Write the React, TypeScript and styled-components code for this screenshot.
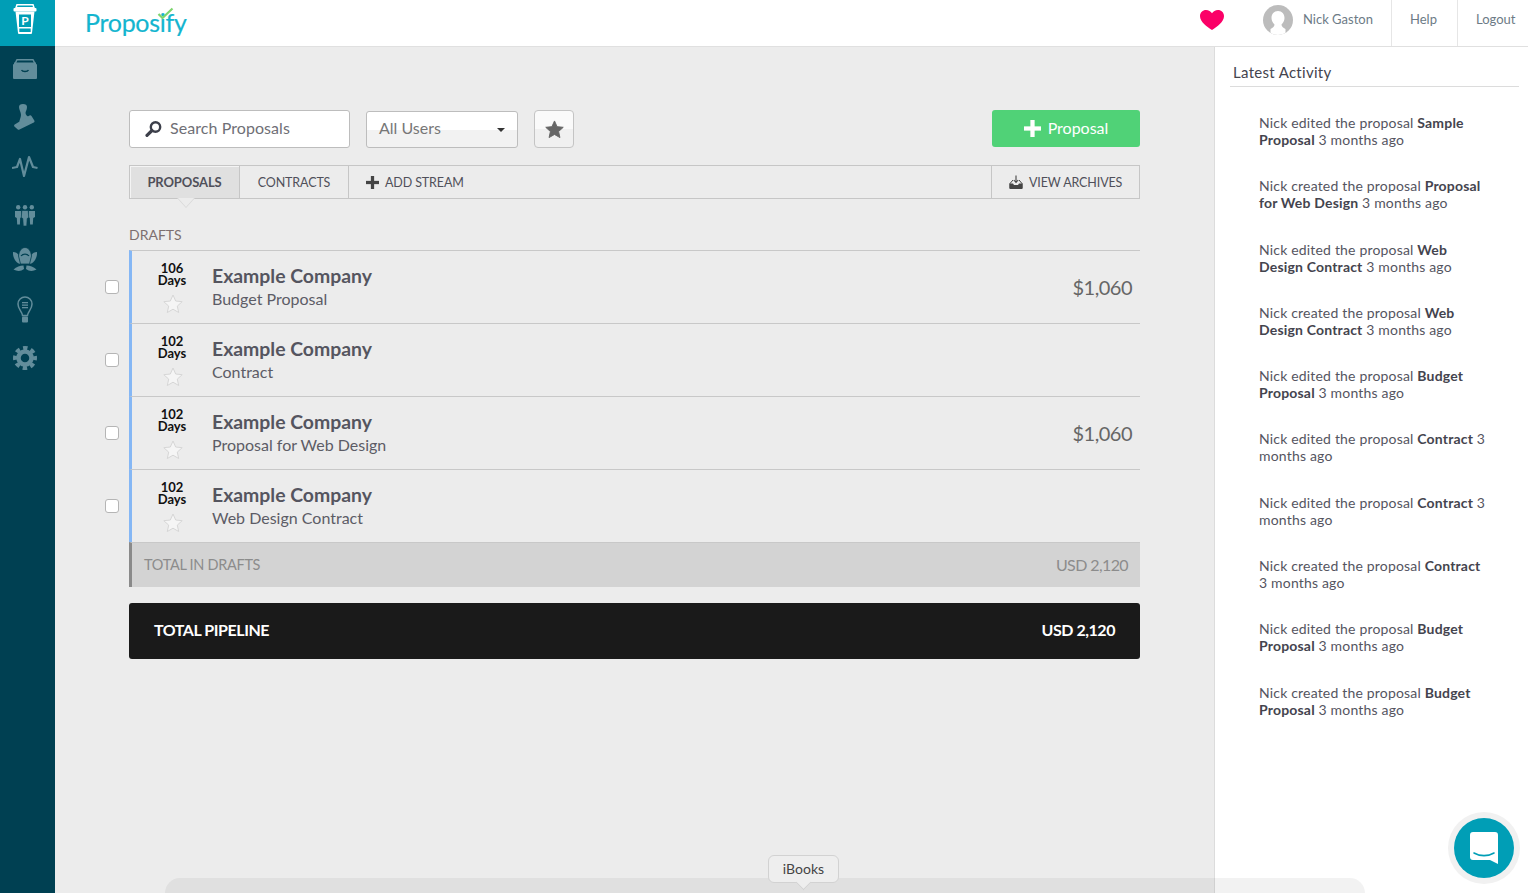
import styled, { createGlobalStyle } from "styled-components";

const GlobalStyle = createGlobalStyle`
  html, body {
    margin: 0;
    height: 100%;
    overflow: hidden;
    font-family: "Lato", "Liberation Sans", sans-serif;
    background: #ececec;
  }
  * { box-sizing: border-box; }
`;

const deals = [
  { days: 106, title: "Budget Proposal", amount: "$1,060" },
  { days: 102, title: "Contract", amount: "" },
  { days: 102, title: "Proposal for Web Design", amount: "$1,060" },
  { days: 102, title: "Web Design Contract", amount: "" },
];

const activity = [
  ["Nick edited the proposal", "Sample Proposal"],
  ["Nick created the proposal", "Proposal for Web Design"],
  ["Nick edited the proposal", "Web Design Contract"],
  ["Nick created the proposal", "Web Design Contract"],
  ["Nick edited the proposal", "Budget Proposal"],
  ["Nick edited the proposal", "Contract"],
  ["Nick edited the proposal", "Contract"],
  ["Nick created the proposal", "Contract"],
  ["Nick edited the proposal", "Budget Proposal"],
  ["Nick created the proposal", "Budget Proposal"],
];

const teal = "#009eb6";
const iconColor = "#628d9b";
const sideColor = "#004052";

function Plus({ size, color }: { size: number; color: string }) {
  const bar = size / 4;
  const start = (size - bar) / 2;
  return (
    <svg width={size} height={size} viewBox={`0 0 ${size} ${size}`}>
      <rect x={start} y="0" width={bar} height={size} fill={color} />
      <rect x="0" y={start} width={size} height={bar} fill={color} />
    </svg>
  );
}

function StarShape({ size, fill, stroke }: { size: number; fill: string; stroke: string }) {
  return (
    <svg width={size} height={size} viewBox="0 0 20 20">
      <path
        d="M10 1l2.700 6 6.500.7-4.900 4.400 1.400 6.400L10 15.200l-5.700 3.300 1.400-6.400L.8 7.700l6.500-.7z"
        fill={fill}
        stroke={stroke}
        strokeWidth="1"
      />
    </svg>
  );
}

function CupIcon() {
  return (
    <svg width="24" height="30" viewBox="0 0 24 30">
      <path d="M4 0.800h16l1 3H3z" fill="none" stroke="#fff" strokeWidth="1.500" />
      <rect x="0.500" y="4" width="23" height="3.400" rx="1" fill="#fff" />
      <path d="M2.500 7.500h19L19 29a1 1 0 0 1-1 1H6a1 1 0 0 1-1-1z" fill="#fff" />
      <rect x="6" y="10.500" width="12" height="12.500" fill={teal} />
      <rect x="6.300" y="24.500" width="11.400" height="3.500" fill={teal} />
      <text x="12" y="21" textAnchor="middle" fontSize="12" fontWeight="700" fontFamily="Lato, sans-serif" fill="#fff">P</text>
    </svg>
  );
}

function ArchiveIcon() {
  return (
    <svg width="24" height="20" viewBox="0 0 24 20">
      <path d="M2 5l1.500-3.500a1 1 0 0 1 1-.8h15a1 1 0 0 1 1 .8L22 5" fill="none" stroke={iconColor} strokeWidth="1.500" />
      <path d="M1 5h22a1 1 0 0 1 1 1v13a1 1 0 0 1-1 1H1a1 1 0 0 1-1-1V6a1 1 0 0 1 1-1z" fill={iconColor} />
      <rect x="1" y="3.500" width="22" height="2" fill={iconColor} />
      <path d="M8.500 11c1 2 6 2 7 0" fill="none" stroke={sideColor} strokeWidth="1.300" />
    </svg>
  );
}

function StampIcon() {
  return (
    <svg width="21" height="26" viewBox="0 0 21 26">
      <path d="M5 3a4 3 0 0 1 8 0c0 3-1.500 4-1.500 6 0 2 2 3 3 4l-9 5.500C5 16 7 14 7 11c0-3-2-5-2-8z" fill={iconColor} />
      <path d="M0.700 20.500L15.500 11.500a1.500 1.500 0 0 1 2 .4l2.800 4.600a1.500 1.500 0 0 1-.5 2L5.500 25.500a1.500 1.500 0 0 1-2-.3L.4 22.500a1.500 1.500 0 0 1 .3-2z" fill={iconColor} />
    </svg>
  );
}

function PulseIcon() {
  return (
    <svg width="26" height="23" viewBox="0 0 26 23">
      <polyline
        points="0,13 5,12 8,4 12,21 17,2 21,12 25.500,13"
        fill="none"
        stroke={iconColor}
        strokeWidth="2.200"
        strokeLinejoin="round"
      />
    </svg>
  );
}

function PeopleIcon() {
  return (
    <svg width="20" height="21" viewBox="0 0 20 21">
      <circle cx="3.200" cy="2.200" r="2.200" fill={iconColor} />
      <circle cx="10" cy="2.200" r="2.200" fill={iconColor} />
      <circle cx="16.800" cy="2.200" r="2.200" fill={iconColor} />
      <path d="M0 6h6l.4 6-1.200 1-.3 6.500H2.200L1.800 13 0 12z" fill={iconColor} />
      <path d="M20 6h-6l-.4 6 1.200 1 .3 6.500h2.700l.4-6.500 1.800-1z" fill={iconColor} />
      <path d="M6.800 5.500h6.400l.5 7-1.500 1-.5 7.500H8.300l-.5-7.500-1.500-1z" fill={iconColor} stroke={sideColor} strokeWidth=".6" />
    </svg>
  );
}

function LotusIcon() {
  return (
    <svg width="24" height="26" viewBox="0 0 24 26">
      <path d="M0 5c2.500 0 4.500 1 5.500 3L8 17C3.500 17-.5 11 0 5z" fill={iconColor} />
      <path d="M24 5c-2.500 0-4.500 1-5.500 3L16 17c4.500 0 8.500-6 8-12z" fill={iconColor} />
      <path d="M5.500 9C6 4 8.500 0.500 12 0.500S18 4 18.500 9l-2 8h-9z" fill={iconColor} stroke={sideColor} strokeWidth=".8" />
      <path d="M8 9c2-2.500 6-2.500 8 0" fill="none" stroke={sideColor} strokeWidth="1.200" />
      <path d="M0.500 22.500C3.500 20 7 18.500 10.500 18.500L11 22c-3 2.500-7 2.500-10.500.5z" fill={iconColor} />
      <path d="M23.500 22.500C20.500 20 17 18.500 13.500 18.500L13 22c3 2.500 7 2.500 10.500.5z" fill={iconColor} />
    </svg>
  );
}

function BulbIcon() {
  return (
    <svg width="16" height="27" viewBox="0 0 16 27">
      <path d="M5.500 19.500C5 15 1 13.500 1 8a7 7 0 0 1 14 0c0 5.500-4 7-4.500 11.500z" fill="none" stroke={iconColor} strokeWidth="1.500" />
      <rect x="5" y="6" width="6" height="1.300" fill={iconColor} />
      <rect x="5" y="8.500" width="6" height="1.300" fill={iconColor} />
      <rect x="5" y="11" width="6" height="1.300" fill={iconColor} />
      <rect x="5" y="20.500" width="6" height="6" rx="1" fill={iconColor} />
    </svg>
  );
}

function GearIcon() {
  return (
    <svg width="24" height="24" viewBox="0 0 24 24">
      <circle cx="12" cy="12" r="6.500" fill="none" stroke={iconColor} strokeWidth="4.500" />
      <circle cx="12" cy="12" r="10" fill="none" stroke={iconColor} strokeWidth="4" strokeDasharray="4.400 3.450" strokeDashoffset="2.200" />
    </svg>
  );
}

function SearchIcon() {
  return (
    <svg width="17" height="16" viewBox="0 0 17 16">
      <circle cx="10.500" cy="6" r="4.700" fill="none" stroke="#3c3f4a" strokeWidth="2.400" />
      <line x1="7" y1="9.500" x2="2" y2="14.300" stroke="#3c3f4a" strokeWidth="3.200" strokeLinecap="round" />
    </svg>
  );
}

function TrayIcon() {
  return (
    <svg width="14" height="14" viewBox="0 0 14 14">
      <path d="M4 5L1 8.500V13a1 1 0 0 0 1 1h10a1 1 0 0 0 1-1V8.500L10 5" fill="none" stroke="#444" strokeWidth="1" />
      <path d="M.5 8.500h3.500l1 1.500h4l1-1.500h3.500V13a1 1 0 0 1-1 1h-11a1 1 0 0 1-1-1z" fill="#444" />
      <path d="M7 0.500V7M4.800 5L7 7.500 9.200 5" fill="none" stroke="#444" strokeWidth="1.100" />
    </svg>
  );
}

function HeartIcon() {
  return (
    <svg width="24" height="20" viewBox="0 0 24 20">
      <path d="M12 20C7 16.500 0 12 0 6.200 0 2.500 2.800 0 6 0c2.600 0 4.800 1.300 6 3.200C13.200 1.300 15.400 0 18 0c3.200 0 6 2.500 6 6.200C24 12 17 16.500 12 20z" fill="#fb0067" />
    </svg>
  );
}

function AvatarIcon() {
  return (
    <svg width="30" height="30" viewBox="0 0 30 30">
      <defs>
        <clipPath id="avatar-clip">
          <circle cx="15" cy="15" r="15" />
        </clipPath>
      </defs>
      <g clipPath="url(#avatar-clip)">
        <rect width="30" height="30" fill="#bcbcbc" />
        <path d="M15 6c4 0 6.500 3 6.500 7 0 3-1.500 5-3 6.500 0 2 1.500 3 4 4.500v6H7.500v-6c2.500-1.500 4-2.500 4-4.500-1.500-1.500-3-3.500-3-6.500 0-4 2.500-7 6.500-7z" fill="#fff" />
      </g>
    </svg>
  );
}

function ChatIcon() {
  return (
    <svg width="28" height="32" viewBox="0 0 28 32">
      <path d="M3 0h22a3 3 0 0 1 3 3v29l-8-4H3a3 3 0 0 1-3-3V3a3 3 0 0 1 3-3z" fill="#fff" />
      <path d="M4 21c6 3.500 14 3.500 20 0" fill="none" stroke={teal} strokeWidth="1.600" strokeLinecap="round" />
    </svg>
  );
}

export default function App() {
  return (
    <Page>
      <GlobalStyle />
      <Sidebar>
        <Brand>
          <CupIcon />
        </Brand>
        <NavItem $h={46}><ArchiveIcon /></NavItem>
        <NavItem $h={50}><StampIcon /></NavItem>
        <NavItem $h={48}><PulseIcon /></NavItem>
        <NavItem $h={50}><PeopleIcon /></NavItem>
        <NavItem $h={40}><LotusIcon /></NavItem>
        <NavItem $h={58}><BulbIcon /></NavItem>
        <NavItem $h={40}><GearIcon /></NavItem>
      </Sidebar>

      <Body>
        <Header>
          <Logo>
            Proposify
            <LogoCheck width="17" height="13" viewBox="0 0 17 13">
              <path d="M1.500 7l4 4L15.500 1.500" fill="none" stroke="#7dd56f" strokeWidth="2.200" />
            </LogoCheck>
          </Logo>
          <HeaderRight>
            <HeartCell><HeartIcon /></HeartCell>
            <UserCell>
              <AvatarIcon />
              <span>Nick Gaston</span>
            </UserCell>
            <HeaderLink $w={66} $left={18}>Help</HeaderLink>
            <HeaderLink $w={71} $left={18}>Logout</HeaderLink>
          </HeaderRight>
        </Header>

        <Columns>
          <Main>
            <Toolbar>
              <SearchBox>
                <SearchIcon />
                <span>Search Proposals</span>
              </SearchBox>
              <SelectBox>
                <span>All Users</span>
                <Caret />
              </SelectBox>
              <StarButton>
                <StarShape size={19} fill="#666" stroke="#666" />
              </StarButton>
              <NewButton>
                <Plus size={17} color="#fff" />
                <span>Proposal</span>
              </NewButton>
            </Toolbar>

            <Tabs>
              <Tab $active $w={110}>PROPOSALS</Tab>
              <Tab $w={109}>CONTRACTS</Tab>
              <AddStream>
                <Plus size={13} color="#444" />
                <span>ADD STREAM</span>
              </AddStream>
              <Archives>
                <TrayIcon />
                <span>VIEW ARCHIVES</span>
              </Archives>
            </Tabs>

            <SectionLabel>DRAFTS</SectionLabel>
            {deals.map((deal, i) => (
              <DealRow key={i}>
                <Check />
                <DealCard>
                  <DaysCol>
                    <Days>{deal.days}<br />Days</Days>
                    <StarShape size={20} fill="#f5f5f5" stroke="#d6d6d6" />
                  </DaysCol>
                  <DealText>
                    <Company>Example Company</Company>
                    <DealTitle>{deal.title}</DealTitle>
                  </DealText>
                  <Amount>{deal.amount}</Amount>
                </DealCard>
              </DealRow>
            ))}
            <TotalRow>
              <span>TOTAL IN DRAFTS</span>
              <TotalValue>USD 2,120</TotalValue>
            </TotalRow>
            <Pipeline>
              <span>TOTAL PIPELINE</span>
              <span>USD 2,120</span>
            </Pipeline>
          </Main>

          <Aside>
            <AsideTitle>Latest Activity</AsideTitle>
            <ActivityList>
              {activity.map(([action, name], i) => (
                <ActivityItem key={i}>
                  {action} <b>{name}</b> 3 months ago
                </ActivityItem>
              ))}
            </ActivityList>
          </Aside>
        </Columns>
      </Body>

      <Dock />
      <DockTip>iBooks</DockTip>
      <ChatHalo>
        <ChatBubble>
          <ChatIcon />
        </ChatBubble>
      </ChatHalo>
    </Page>
  );
}

// STYLING
const Page = styled.div`
  display: flex;
  height: 100vh;
  overflow: hidden;
  position: relative;
`;

const Sidebar = styled.nav`
  width: 55px;
  flex: none;
  display: flex;
  flex-direction: column;
  background: ${sideColor};
`;

const Brand = styled.div`
  height: 46px;
  background: ${teal};
  display: flex;
  justify-content: center;
  padding-top: 4px;
  padding-right: 6px;
`;

const NavItem = styled.div<{ $h: number }>`
  height: ${(p) => p.$h}px;
  display: flex;
  align-items: center;
  justify-content: center;
  padding-right: 6px;
`;

const Body = styled.div`
  flex: 1;
  min-width: 0;
  display: flex;
  flex-direction: column;
`;

const Header = styled.header`
  height: 47px;
  flex: none;
  background: #fff;
  border-bottom: 1px solid #e0e0e0;
  display: flex;
  align-items: stretch;
  justify-content: space-between;
  padding-left: 31px;
`;

const Logo = styled.div`
  position: relative;
  align-self: center;
  margin-top: -2px;
  margin-left: -1px;
  color: #14b5cf;
  font-size: 25px;
  letter-spacing: -0.3px;
  -webkit-text-stroke: 0.2px #14b5cf;
`;

const LogoCheck = styled.svg`
  position: absolute;
  left: 72px;
  top: 0;
`;

const HeaderRight = styled.div`
  display: flex;
  align-items: stretch;
`;

const HeartCell = styled.div`
  display: flex;
  align-items: center;
  padding-right: 39px;
  padding-bottom: 6px;
`;

const UserCell = styled.div`
  display: flex;
  align-items: flex-start;
  gap: 10px;
  width: 128px;
  padding-top: 5px;
  color: #6d7b86;
  font-size: 13px;

  span {
    margin-top: 6px;
  }
`;

const HeaderLink = styled.div<{ $w: number; $left: number }>`
  width: ${(p) => p.$w}px;
  border-left: 1px solid #e6e6e6;
  color: #6d7b86;
  font-size: 13px;
  padding: 11px 0 0 ${(p) => p.$left}px;
`;

const Columns = styled.div`
  flex: 1;
  display: flex;
  min-height: 0;
`;

const Main = styled.main`
  flex: 1;
  min-width: 0;
  padding: 63px 74px 0;
`;

const Toolbar = styled.div`
  display: flex;
  align-items: flex-start;
  height: 38px;
`;

const SearchBox = styled.div`
  width: 221px;
  height: 38px;
  display: flex;
  align-items: center;
  gap: 8px;
  padding-left: 15px;
  background: #fff;
  border: 1px solid #bdbdbd;
  border-radius: 3px;
  color: #6f6f76;
  font-size: 16px;
  letter-spacing: 0.07px;

  span {
    margin-top: -3px;
  }
`;

const SelectBox = styled.div`
  width: 152px;
  height: 37px;
  margin: 1px 0 0 16px;
  display: flex;
  align-items: center;
  justify-content: space-between;
  padding: 0 12px;
  background: linear-gradient(#fff 50%, #f2f2f2 50%);
  border: 1px solid #bdbdbd;
  border-radius: 3px;
  color: #777;
  font-size: 16px;

  span {
    margin-top: -4px;
  }
`;

const Caret = styled.i`
  width: 0;
  height: 0;
  border-left: 4px solid transparent;
  border-right: 4px solid transparent;
  border-top: 4px solid #333;
`;

const StarButton = styled.div`
  width: 40px;
  height: 38px;
  margin-left: 16px;
  display: flex;
  align-items: center;
  justify-content: center;
  background: linear-gradient(#fafafa 50%, #f0f0f0 50%);
  border: 1px solid #c4c4c4;
  border-radius: 4px;
`;

const NewButton = styled.div`
  width: 148px;
  height: 37px;
  margin-left: auto;
  display: flex;
  align-items: center;
  justify-content: center;
  gap: 7px;
  background: #50d277;
  border-radius: 3px;
  color: #fff;
  font-size: 16px;

  span {
    margin-top: -2px;
  }
`;

const Tabs = styled.div`
  display: flex;
  height: 34px;
  margin-top: 17px;
  border: 1px solid #c6c6c6;
  font-size: 12.500px;
  letter-spacing: -0.12px;
  color: #50505a;
`;

const Tab = styled.div<{ $active?: boolean; $w: number }>`
  position: relative;
  width: ${(p) => p.$w}px;
  display: flex;
  align-items: center;
  justify-content: center;
  border-right: 1px solid #c6c6c6;
  background: ${(p) => (p.$active ? "#e0e0e0" : "transparent")};
  font-size: ${(p) => (p.$active ? "13px" : "12.500px")};
  font-weight: ${(p) => (p.$active ? 700 : 400)};
  box-shadow: ${(p) => (p.$active ? "inset 1px 1px 0 #f4f4f4" : "none")};

  &::before,
  &::after {
    content: "";
    display: ${(p) => (p.$active ? "block" : "none")};
    position: absolute;
    width: 0;
    height: 0;
    border-style: solid;
    border-color: transparent;
  }

  &::before {
    left: 47px;
    top: 100%;
    border-width: 10px 9px 0;
    border-top-color: #d8d8d8;
  }

  &::after {
    left: 48px;
    top: 100%;
    border-width: 9px 8px 0;
    border-top-color: #ececec;
  }
`;

const AddStream = styled.div`
  flex: 1;
  display: flex;
  align-items: center;
  gap: 6px;
  padding-left: 17px;
`;

const Archives = styled.div`
  width: 148px;
  display: flex;
  align-items: center;
  gap: 6px;
  padding-left: 17px;
  border-left: 1px solid #c6c6c6;
`;

const SectionLabel = styled.div`
  margin-top: 27px;
  height: 24px;
  color: #7d6f6f;
  font-size: 14px;
  line-height: 17px;
`;

const DealRow = styled.div`
  display: flex;
  align-items: center;
  height: 73px;
  margin-left: -24px;
`;

const Check = styled.span`
  width: 14px;
  height: 14px;
  margin-right: 10px;
  flex: none;
  background: #fff;
  border: 1px solid #b5b5b5;
  border-radius: 3px;
`;

const DealCard = styled.div`
  flex: 1;
  height: 100%;
  display: flex;
  border-top: 1px solid #c8c8c8;
  border-left: 3px solid #85b7f5;
`;

const DaysCol = styled.div`
  width: 80px;
  flex: none;
  display: flex;
  flex-direction: column;
  align-items: center;
  padding-top: 11px;
  gap: 8px;

  svg {
    margin-left: 2px;
  }
`;

const Days = styled.div`
  color: #111;
  font-size: 13px;
  font-weight: 700;
  line-height: 12px;
  text-align: center;
`;

const DealText = styled.div`
  flex: 1;
  padding-top: 12px;
`;

const Company = styled.div`
  color: #55555f;
  font-size: 19.400px;
  font-weight: 700;
  line-height: 26px;
`;

const DealTitle = styled.div`
  color: #5c5c66;
  font-size: 16px;
  line-height: 20px;
`;

const Amount = styled.div`
  align-self: center;
  padding-right: 8px;
  color: #666;
  font-size: 20px;
  letter-spacing: -0.5px;
`;

const TotalRow = styled.div`
  height: 45px;
  display: flex;
  align-items: center;
  justify-content: space-between;
  padding: 0 12px 2px;
  background: #d3d3d3;
  border-top: 1px solid #c8c8c8;
  border-left: 3px solid #8a8a8a;
  color: #8c8c8c;
  font-size: 14.500px;
  letter-spacing: -0.3px;
`;

const TotalValue = styled.span`
  font-size: 16px;
  letter-spacing: -0.6px;
`;

const Pipeline = styled.div`
  height: 56px;
  margin-top: 16px;
  display: flex;
  align-items: center;
  justify-content: space-between;
  padding: 0 25px 3px;
  background: #1a1a1a;
  border-radius: 3px;
  color: #fff;
  font-size: 16px;
  font-weight: 700;
  letter-spacing: -0.45px;
`;

const Aside = styled.aside`
  width: 314px;
  flex: none;
  background: #fff;
  border-left: 1px solid #dcdcdc;
  padding: 0 9px 0 15px;
`;

const AsideTitle = styled.div`
  height: 40px;
  padding: 16px 0 0 3px;
  border-bottom: 1px solid #dcdcdc;
  color: #44444e;
  font-size: 15px;
  letter-spacing: 0.3px;
`;

const ActivityList = styled.div`
  display: flex;
  flex-direction: column;
  gap: 29.300px;
  padding: 27px 31px 0 29px;
`;

const ActivityItem = styled.div`
  color: #55555f;
  font-size: 14px;
  line-height: 17px;
  letter-spacing: 0.18px;

  b {
    color: #44444e;
  }
`;

const Dock = styled.div`
  position: absolute;
  left: 165px;
  width: 1200px;
  top: 878px;
  bottom: 0;
  background: rgba(0, 0, 0, 0.05);
  border-radius: 28px 28px 0 0;
`;

const DockTip = styled.div`
  position: absolute;
  left: 768px;
  top: 855px;
  width: 71px;
  height: 28px;
  padding-bottom: 2px;
  display: flex;
  align-items: center;
  justify-content: center;
  background: #eeeeee;
  border: 1px solid #d2d2d2;
  border-radius: 6px;
  color: #444;
  font-size: 14px;

  &::after {
    content: "";
    position: absolute;
    left: 29px;
    bottom: -6px;
    width: 10px;
    height: 10px;
    background: #eeeeee;
    border-right: 1px solid #d2d2d2;
    border-bottom: 1px solid #d2d2d2;
    transform: rotate(45deg);
  }
`;

const ChatHalo = styled.div`
  position: absolute;
  right: 8px;
  bottom: 9px;
  width: 72px;
  height: 72px;
  padding: 6px;
  border-radius: 50%;
  background: #f1f1f1;
`;

const ChatBubble = styled.div`
  width: 60px;
  height: 60px;
  display: flex;
  align-items: center;
  justify-content: center;
  border-radius: 50%;
  background: ${teal};
`;
